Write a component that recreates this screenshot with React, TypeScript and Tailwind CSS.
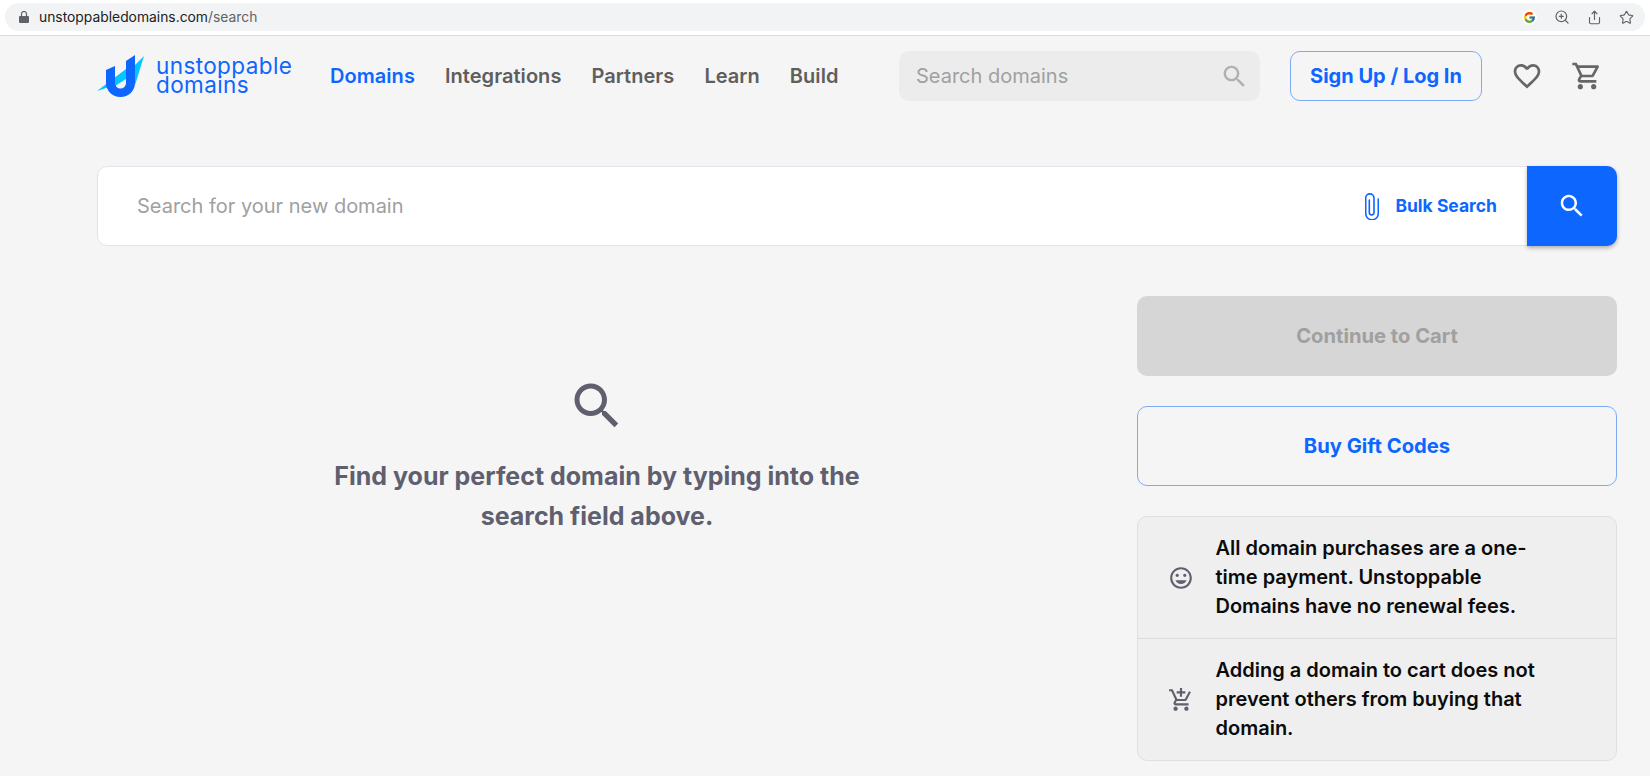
import React from "react";
import { FcGoogle } from "react-icons/fc";
import { ZoomIn, Share, Star } from "lucide-react";

const paths = {
  heart: "M16.5 3c-1.74 0-3.41.81-4.5 2.09C10.91 3.81 9.24 3 7.5 3 4.42 3 2 5.42 2 8.5c0 3.78 3.4 6.86 8.55 11.54L12 21.35l1.45-1.32C18.6 15.36 22 12.28 22 8.5 22 5.42 19.58 3 16.5 3zm-4.4 15.55l-.1.1-.1-.1C7.14 14.24 4 11.39 4 8.5 4 6.5 5.5 5 7.5 5c1.54 0 3.04.99 3.57 2.36h1.87C13.46 5.99 14.96 5 16.5 5c2 0 3.5 1.5 3.5 3.5 0 2.89-3.14 5.74-7.9 10.05z",
  cart: "M15.55 13c.75 0 1.41-.41 1.75-1.03l3.58-6.49c.37-.66-.11-1.48-.87-1.48H5.21l-.94-2H1v2h2l3.6 7.59-1.35 2.44C4.52 15.37 5.48 17 7 17h12v-2H7l1.1-2h7.45zM6.16 6h12.15l-2.76 5H8.53L6.16 6zM7 18c-1.1 0-1.99.9-1.99 2S5.9 22 7 22s2-.9 2-2-.9-2-2-2zm10 0c-1.1 0-1.99.9-1.99 2s.89 2 1.99 2 2-.9 2-2-.9-2-2-2z",
  search: "M15.5 14h-.79l-.28-.27C15.41 12.59 16 11.11 16 9.5 16 5.91 13.09 3 9.5 3S3 5.91 3 9.5 5.91 16 9.5 16c1.61 0 3.09-.59 4.23-1.57l.27.28v.79l5 4.99L20.49 19l-4.99-5zm-6 0C7.01 14 5 11.99 5 9.5S7.01 5 9.5 5 14 7.01 14 9.5 11.99 14 9.5 14z",
  addCart: "M11 9h2V6h3V4h-3V1h-2v3H8v2h3v3zm-4 9c-1.1 0-1.99.9-1.99 2S5.9 22 7 22s2-.9 2-2-.9-2-2-2zm10 0c-1.1 0-1.99.9-1.99 2s.89 2 1.99 2 2-.9 2-2-.9-2-2-2zm-9.83-3.25l.03-.12.9-1.63h7.45c.75 0 1.41-.41 1.75-1.03l3.86-7.01L19.42 4h-.01l-1.1 2-2.76 5H8.53l-.13-.27L6.16 6l-.95-2-.94-2H1v2h2l3.6 7.59-1.35 2.45c-.16.28-.25.61-.25.96 0 1.1.9 2 2 2h12v-2H7.42c-.13 0-.25-.11-.25-.25z",
  mood: "M11.99 2C6.47 2 2 6.48 2 12s4.47 10 9.99 10C17.52 22 22 17.52 22 12S17.52 2 11.99 2zM12 20c-4.42 0-8-3.58-8-8s3.58-8 8-8 8 3.58 8 8-3.58 8-8 8zm3.5-9c.83 0 1.5-.67 1.5-1.5S16.33 8 15.5 8 14 8.67 14 9.5s.67 1.5 1.5 1.5zm-7 0c.83 0 1.5-.67 1.5-1.5S9.33 8 8.5 8 7 8.67 7 9.5 7.67 11 8.5 11zm3.5 6.5c2.33 0 4.31-1.46 5.11-3.5H6.89c.8 2.04 2.78 3.5 5.11 3.5z",
};

function Icon({ d, className }: { d: string; className: string }) {
  return (
    <svg viewBox="0 0 24 24" className={className} fill="currentColor">
      <path d={d} />
    </svg>
  );
}

function Logo() {
  return (
    <svg viewBox="0 0 48 42" className="w-[48px] h-[42px] shrink-0">
      <path d="M38 10 L47 1 L38 30 Z" fill="#00c7ff" />
      <path d="M0 36 L29 14 L29 24 L18 31 L9 33 Z" fill="#00c7ff" />
      <path
        d="M9 15 L18 11 L18 28 A5.5 5.5 0 0 0 29 28 L29 6 L38 0 L38 28 A14.5 14 0 0 1 9 28 Z"
        fill="#0d67fe"
      />
    </svg>
  );
}

const nav = ["Integrations", "Partners", "Learn", "Build"];

export default function App() {
  return (
    <div className="w-[1650px] h-[776px] overflow-hidden bg-[#f5f5f5] font-['Inter',sans-serif] flex flex-col">
      <div className="h-[36px] shrink-0 bg-white border-b border-[#dcdcdc] px-[5px] pt-[3px]">
        <div className="h-[28px] rounded-full bg-[#f1f3f4] flex items-center pl-[14px] pr-[11px]">
          <svg viewBox="0 0 10 12" className="w-[10px] h-[12px] text-[#5f6368]" fill="currentColor">
            <path d="M1 5 H9 A1 1 0 0 1 10 6 V11 A1 1 0 0 1 9 12 H1 A1 1 0 0 1 0 11 V6 A1 1 0 0 1 1 5 Z" />
            <path d="M2.500 5.500 V3 A2.500 2.500 0 0 1 7.500 3 V5.500" fill="none" stroke="currentColor" strokeWidth="1.2" />
          </svg>
          <span className="ml-[10px] text-[13.85px] text-[#202124]">
            unstoppabledomains.com<span className="text-[#5f6368]">/search</span>
          </span>
          <div className="ml-auto flex items-center gap-[17px] text-[#5f6368]">
            <div className="w-[15px] h-[15px] rounded-full bg-white flex items-center justify-center">
              <FcGoogle className="w-[13px] h-[13px]" />
            </div>
            <ZoomIn className="w-[16px] h-[16px]" strokeWidth={1.8} />
            <Share className="w-[15px] h-[15px]" strokeWidth={1.8} />
            <Star className="w-[15px] h-[15px]" strokeWidth={1.8} />
          </div>
        </div>
      </div>

      <div className="h-[80px] shrink-0 flex items-center pl-[97px] pr-[33px]">
        <div className="flex items-center gap-[11px] w-[233px] shrink-0">
          <Logo />
          <div className="text-[#0d67fe] text-[22.5px] leading-[19px] tracking-[0.4px] pb-[2px] whitespace-nowrap">
            unstoppable
            <br />
            domains
          </div>
        </div>
        <nav className="flex items-center gap-[30px] text-[20px] font-semibold text-[#5e5e5e] tracking-[0.05px] w-[569px] shrink-0">
          <span className="text-[#0d67fe]">Domains</span>
          {nav.map((n) => (
            <span key={n}>{n}</span>
          ))}
        </nav>
        <div className="w-[361px] h-[50px] shrink-0 rounded-[10px] bg-[#ececec] flex items-center pl-[17px] pr-[11px] text-[20px] text-[#a0a0a0]">
          <span>Search domains</span>
          <Icon d={paths.search} className="ml-auto w-[29px] h-[29px] text-[#b0b0b0]" />
        </div>
        <button className="ml-[30px] w-[192px] h-[50px] shrink-0 rounded-[10px] border border-[#7dacf5] text-[#0d67fe] text-[20px] font-bold">
          Sign Up / Log In
        </button>
        <Icon d={paths.heart} className="ml-[29px] w-[32px] h-[32px] text-[#666666]" />
        <Icon d={paths.cart} className="ml-[28px] w-[32px] h-[32px] text-[#666666]" />
      </div>

      <div className="pl-[97px] pr-[33px] pt-[50px] flex flex-col">
        <div className="h-[80px] flex rounded-[10px] bg-white border border-[#e3e3ec]">
          <div className="flex-1 flex items-center pl-[39px] pb-[1px] text-[20px] text-[#a0a0a0]">
            Search for your new domain
          </div>
          <div className="flex items-center gap-[16px] pr-[30px] text-[#0d67fe]">
            <svg viewBox="0 0 14 27" className="w-[14px] h-[27px]" fill="none" stroke="currentColor" strokeWidth="1.6" strokeLinecap="round">
              <path d="M13.3 6 V20.500 A6.300 6.300 0 0 1 0.700 20.500 V5 A4.150 4.150 0 0 1 9 5 V19.500 A2.350 2.350 0 0 1 4.300 19.500 V7" />
            </svg>
            <span className="text-[17.5px] font-bold">Bulk Search</span>
          </div>
          <div className="-my-px -mr-px w-[90px] shrink-0 rounded-r-[10px] bg-[#0d67fe] shadow-[0_2px_4px_rgba(0,0,0,0.3)] flex items-center justify-center">
            <Icon d={paths.search} className="w-[30px] h-[30px] text-white" />
          </div>
        </div>

        <div className="mt-[50px] flex">
          <div className="flex-1 flex flex-col items-center pt-[80px] pr-[40px]">
            <Icon d={paths.search} className="w-[60px] h-[60px] text-[#5f5f70]" />
            <p className="mt-[20px] w-[600px] text-center text-[25px] leading-[40px] font-bold text-[#5f5f70]">
              Find your perfect domain by typing into the search field above.
            </p>
          </div>
          <div className="w-[480px] shrink-0 flex flex-col gap-[30px]">
            <div className="h-[80px] rounded-[10px] bg-[#d6d6d6] flex items-center justify-center text-[20.2px] font-bold text-[#a0a0a0]">
              Continue to Cart
            </div>
            <div className="h-[80px] rounded-[10px] border border-[#7dacf5] flex items-center justify-center text-[20.2px] font-bold text-[#0d67fe]">
              Buy Gift Codes
            </div>
            <div className="h-[245px] rounded-[10px] border border-[#dfdfe4] bg-[#efefef] flex flex-col">
              <div className="h-[122px] shrink-0 flex items-center border-b border-[#dcdce2] pl-[30px]">
                <Icon d={paths.mood} className="w-[26px] h-[26px] text-[#5f5f70] shrink-0" />
                <p className="ml-[21.5px] w-[320px] text-[20px] leading-[29px] font-semibold text-[#0b0b0b]">
                  All domain purchases are a one-time payment. Unstoppable Domains have no renewal fees.
                </p>
              </div>
              <div className="flex-1 flex items-center pl-[30px]">
                <Icon d={paths.addCart} className="w-[26px] h-[26px] text-[#5f5f70] shrink-0" />
                <p className="ml-[21.5px] w-[330px] text-[20px] leading-[29px] font-semibold text-[#0b0b0b]">
                  Adding a domain to cart does not prevent others from buying that domain.
                </p>
              </div>
            </div>
          </div>
        </div>
      </div>
    </div>
  );
}
